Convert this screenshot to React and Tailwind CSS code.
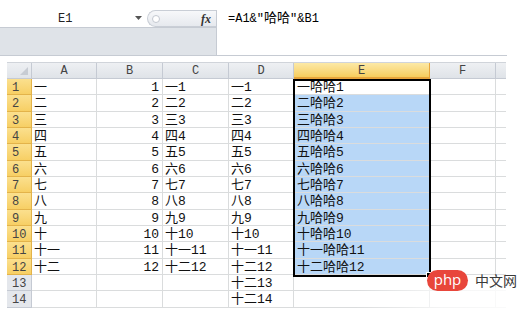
import React from 'react';

const nums = ['一', '二', '三', '四', '五', '六', '七', '八', '九', '十', '十一', '十二'];

const rows = Array.from({ length: 14 }, (_, i) => {
  const n = i + 1;
  const a = nums[i] || '';
  return {
    n,
    a,
    b: a ? String(n) : '',
    c: a ? a + n : '',
    d: a ? a + n : '十二' + n,
    e: a ? a + '哈哈' + n : '',
  };
});

const cell = 'h-full border-r border-[#dadcdd] px-[2px] overflow-hidden whitespace-nowrap';

function Row({ r }) {
  const sel = r.n <= 12;
  const blue = r.n >= 2 && r.n <= 12;
  return (
    <div className="flex h-[16.33px] leading-[18px]">
      <div
        className={
          sel
            ? 'w-[25px] h-full pl-[5px] border-r border-b border-[#e3b34a] bg-gradient-to-b from-[#fbe08e] to-[#f7cf64] text-[#444]'
            : 'w-[25px] h-full pl-[5px] border-r border-b border-[#c5cad3] bg-[#e4e7ec] text-[#444]'
        }
        style={{ fontFamily: '"Liberation Mono", monospace', fontSize: '12px' }}
      >
        {r.n}
      </div>
      <div className="flex flex-1 border-b border-[#dadcdd] text-[#111]">
        <div className={`${cell} w-[65px]`}>{r.a}</div>
        <div className={`${cell} w-[66px] text-right pr-[3px]`}>{r.b}</div>
        <div className={`${cell} w-[66px]`}>{r.c}</div>
        <div className={`${cell} w-[65px]`}>{r.d}</div>
        <div className={`${cell} w-[136px] pl-[3px] ${blue ? 'bg-[#b8d7f7]' : ''}`}>{r.e}</div>
        <div className={`${cell} w-[66px]`}></div>
        <div className="w-[10px] h-full"></div>
      </div>
    </div>
  );
}

export default function App() {
  const cols = [
    ['A', 65],
    ['B', 66],
    ['C', 66],
    ['D', 65],
    ['E', 136],
    ['F', 66],
  ];
  return (
    <div
      className="relative w-[527px] h-[313px] overflow-hidden bg-white text-black text-[13px]"
      style={{ fontFamily: '"Liberation Mono", "Noto Sans CJK SC", monospace' }}
    >
      {/* formula bar */}
      <div className="w-[507px] h-[56px] flex border-b border-[#c6cbd3]">
        <div className="w-[216px] flex flex-col">
          <div className="h-[10px]"></div>
          <div className="h-[18px] flex items-center border-b border-[#c6cbd3] text-[12px]">
            <div className="w-[147px] flex items-center">
              <span className="ml-[58px] text-[#222]">E1</span>
              <svg className="ml-[63px]" width="7" height="5" viewBox="0 0 7 5">
                <path d="M0 0h7L3.5 4z" fill="#555" />
              </svg>
            </div>
            <div className="relative flex-1 h-full flex items-center rounded-l-full border-l border-y border-[#c9ced6] bg-gradient-to-b from-[#f7f8fa] to-[#e6e9ee]">
              <div className="ml-[4px] w-[8px] h-[8px] rounded-full border border-[#c3c8d0] bg-white"></div>
              <span
                className="ml-auto mr-[5px] italic font-bold text-[12px] text-[#333]"
                style={{ fontFamily: '"Liberation Serif", serif' }}
              >
                fx
              </span>
            </div>
          </div>
          <div className="flex-1 bg-[#dfe3e8]"></div>
        </div>
        <div className="flex-1 mt-[10px] border-l border-[#c6cbd3] pl-[11px] pt-[1px] text-[12px] leading-[16px]">
          =A1&amp;"<span className="text-[13px]">哈哈</span>"&amp;B1
        </div>
      </div>
      <div className="h-[6px]"></div>

      {/* sheet */}
      <div className="pl-[7px] w-[506px]">
        <div
          className="flex h-[17px] border-t border-[#d0d4da] text-[12px] leading-[16px] text-[#444]"
          style={{ fontFamily: '"Liberation Mono", monospace' }}
        >
          <div className="relative w-[25px] h-full border-r border-b border-[#c5cad3] bg-gradient-to-b from-[#eef0f3] to-[#e0e4e9]">
            <svg className="absolute right-[3px] bottom-[3px]" width="8" height="8" viewBox="0 0 8 8">
              <path d="M8 0v8H0z" fill="#c7ccd3" />
            </svg>
          </div>
          {cols.map(([c, w]) => (
            <div
              key={c}
              style={{ width: w }}
              className={
                c === 'E'
                  ? 'h-full text-center border-r border-b-2 border-[#e9a53c] bg-gradient-to-b from-[#fce9a6] to-[#f7cd5c]'
                  : 'h-full text-center border-r border-b border-[#c5cad3] bg-gradient-to-b from-[#eef0f3] to-[#dfe3e8]'
              }
            >
              {c}
            </div>
          ))}
          <div className="w-[10px] h-full border-b border-[#c5cad3] bg-gradient-to-b from-[#eef0f3] to-[#dfe3e8]"></div>
        </div>
        {rows.map(r => (
          <Row key={r.n} r={r} />
        ))}
      </div>

      {/* selection */}
      <div className="absolute left-[293px] top-[79px] w-[138px] h-[198px] border-2 border-black"></div>
      <div className="absolute left-[426px] top-[272px] w-[6px] h-[6px] bg-black border border-white"></div>

      {/* watermark */}
      <div className="absolute left-[355px] top-[287px] right-0 bottom-0 bg-gradient-to-r from-white/0 via-white/70 to-white/90"></div>
      <div
        className="absolute left-[427px] top-[270px] w-[41px] h-[21px] rounded-full bg-[#e8463b] flex items-center justify-center text-white text-[15px] leading-none pb-[2px]"
        style={{ fontFamily: '"Open Sans", sans-serif' }}
      >
        php
      </div>
      <div
        className="absolute left-[475px] top-[271px] text-[14px] leading-[18px] text-[#3a3a3a]"
        style={{ fontFamily: '"Noto Sans CJK SC", sans-serif' }}
      >
        中文网
      </div>
    </div>
  );
}
